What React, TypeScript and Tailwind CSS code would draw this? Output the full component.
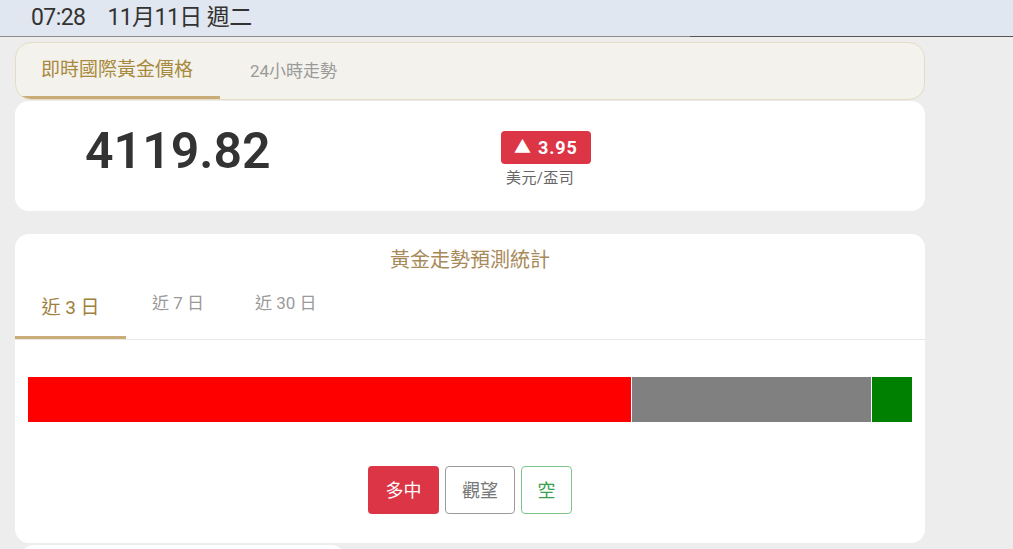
const FONT = "font-['Roboto','Noto_Sans_CJK_TC',sans-serif]";

const BAR = [
  { key: "long", color: "bg-[#ff0000]", width: "w-[603px]" },
  { key: "wait", color: "bg-[#808080]", width: "w-[239px]" },
  { key: "short", color: "bg-[#008000]", width: "w-[40px]" },
];

export default function App() {
  return (
    <div className={`${FONT} w-[1013px] h-[549px] overflow-hidden bg-[#ededed]`}>
      {/* status bar */}
      <div className="h-[37px] bg-[#e1e7f0] flex items-center pl-[31px] text-[23px] text-[#333] relative">
        <span className="tracking-tight">07:28</span>
        <span className="ml-[22px] tracking-tight">11月11日 週二</span>
        <div className="absolute left-0 bottom-0 h-px w-[690px] bg-[#8c8c8c]" />
        <div className="absolute left-[690px] right-0 bottom-0 h-px bg-[#555]" />
      </div>

      <div className="pl-[15px] w-[925px]">
        {/* tab header */}
        <div className="mt-[5px] h-[58px] bg-[#f4f2ec] border border-[#e6dcc2] rounded-[16px] flex items-stretch overflow-hidden">
          <div className="w-[204px] flex items-center pl-[25px] pt-[2px] text-[19px] text-[#a88a3e] border-b-[3px] border-[#c9ad78]">
            即時國際黃金價格
          </div>
          <div className="flex items-center pl-[30px] pt-[1px] text-[17px] text-[#9a9a9a]">24小時走勢</div>
        </div>

        {/* price card */}
        <div className="mt-[1px] h-[110px] bg-white rounded-[14px] flex items-center">
          <div className="ml-[70px] w-[416px] text-[50px] font-semibold text-[#333] leading-none -mt-[10px]">
            4119.82
          </div>
          <div className="flex flex-col items-start mt-[8px]">
            <div className="h-[33px] px-[13px] bg-[#dc3545] rounded-[4px] flex items-center text-white font-bold text-[18px] tracking-wider">
              <span className="text-[17px] mr-[6px]">▲</span>3.95
            </div>
            <div className="mt-[3px] ml-[5px] text-[15px] tracking-wide text-[#666]">美元/盃司</div>
          </div>
        </div>

        {/* stats card */}
        <div className="mt-[23px] h-[309px] bg-white rounded-[14px] overflow-hidden">
          <div className="pt-[11px] text-center text-[20px] text-[#a8895a]">黃金走勢預測統計</div>
          <div className="mt-[14px] flex border-b border-[#e8e8e8]">
            <div className="w-[111px] h-[50px] flex justify-center pt-[5px] text-[19px] text-[#a08040] border-b-[3px] border-[#c9ad78]">
              近 3 日
            </div>
            <div className="ml-[26px] h-[50px] pt-[2px] text-[17px] text-[#9a9a9a]">近 7 日</div>
            <div className="ml-[51px] h-[50px] pt-[2px] text-[17px] text-[#9a9a9a]">近 30 日</div>
          </div>
          <div className="mt-[37px] ml-[13px] flex gap-[1px]">
            {BAR.map((b) => (
              <div key={b.key} className={`${b.color} ${b.width} h-[45px]`} />
            ))}
          </div>
          <div className="mt-[44px] flex justify-center gap-[6px] text-[18px]">
            <button className="w-[71px] h-[48px] rounded-[4px] bg-[#dc3545] text-white">多中</button>
            <button className="w-[70px] h-[48px] rounded-[4px] border border-[#9a9a9a] text-[#777]">觀望</button>
            <button className="w-[51px] h-[48px] rounded-[4px] border border-[#7cc48a] text-[#3aa04e]">空</button>
          </div>
        </div>

        {/* next card peeking */}
        <div className="mt-[2px] ml-[5px] w-[325px] h-[20px] bg-white rounded-t-[14px]" />
      </div>
    </div>
  );
}
